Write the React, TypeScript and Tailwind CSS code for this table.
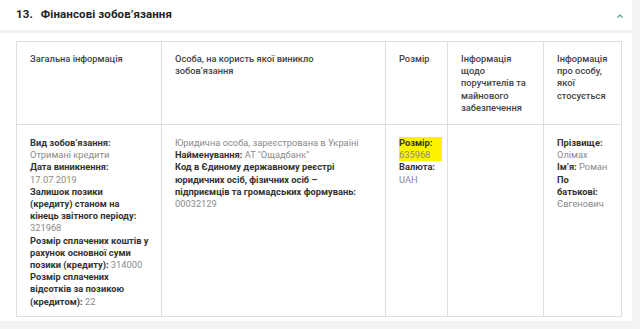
import React from 'react';

type Item = { label?: string; value: string; mark?: boolean };
// a line of the first column: [bold part, gray part]
type Line = [string, string?];

const HEADERS = [
  { text: 'Загальна інформація', w: 'w-[145px]' },
  { text: 'Особа, на користь якої виникло зобов’язання', w: 'w-[224px]' },
  { text: 'Розмір', w: 'w-[62px]' },
  { text: 'Інформація щодо поручителів та майнового забезпечення', w: 'w-[96px]' },
  { text: 'Інформація про особу, якої стосується', w: 'w-[78px]' },
];

// general info column, broken the same way as on the source page
const GENERAL: Line[] = [
  ['Вид зобов’язання:'],
  ['', 'Отримані кредити'],
  ['Дата виникнення:'],
  ['', '17.07.2019'],
  ['Залишок позики'],
  ['(кредиту) станом на'],
  ['кінець звітного періоду:'],
  ['', '321968'],
  ['Розмір сплачених коштів у'],
  ['рахунок основної суми'],
  ['позики (кредиту): ', '314000'],
  ['Розмір сплачених'],
  ['відсотків за позикою'],
  ['(кредитом): ', '22'],
];

const CELLS: Item[][] = [
  [
    { value: 'Юридична особа, зареєстрована в Україні' },
    { label: 'Найменування:', value: 'АТ "Ощадбанк"' },
    {
      label: 'Код в Єдиному державному реєстрі юридичних осіб, фізичних осіб – підприємців та громадських формувань:',
      value: '00032129',
    },
  ],
  [
    { label: 'Розмір:', value: '635968', mark: true },
    { label: 'Валюта:', value: 'UAH' },
  ],
  [],
  [
    { label: 'Прізвище:', value: 'Олімах' },
    { label: 'Ім’я:', value: 'Роман' },
    { label: 'По батькові:', value: 'Євгенович' },
  ],
];

function Entry({ item }: { item: Item }) {
  const body = (
    <>
      {item.label && <span className="font-bold text-[#333]">{item.label} </span>}
      <span className="text-[#8a8a8a]">{item.value}</span>
    </>
  );
  if (item.mark) {
    return (
      <div>
        <span className="inline-block bg-[#fff200] pr-[10px]">{body}</span>
      </div>
    );
  }
  return <div>{body}</div>;
}

const cellCls = 'border border-[#dedede] align-top px-[13px] pt-[12px] pb-[8px] h-[191px]';

export default function App() {
  return (
    <div className="w-[640px] h-[329px] bg-[#f3f3f3] font-['Roboto','Liberation_Sans',sans-serif] overflow-hidden">
      <div className="w-[632px] bg-white pb-1">
        {/* section header */}
        <div className="h-[33px] flex items-center justify-between pl-4 pr-[8px] border-b-[3px] border-[#f2f2f2]">
          <h2 className="text-[11.5px] font-bold text-[#222] tracking-[0.1px]">
            13.<span className="ml-[8px]">Фінансові зобов’язання</span>
          </h2>
          <svg width="8" height="6" viewBox="0 0 8 6" className="mt-[2px]">
            <path d="M1.5 4.5 L4 2 L6.5 4.5" fill="none" stroke="#5aa89a" strokeWidth="1.4" />
          </svg>
        </div>

        <div className="pt-[8px] pl-4 pr-[11px]">
          <table className="w-[605px] border-collapse text-[9.3px] leading-[12.2px] table-fixed">
            <thead>
              <tr>
                {HEADERS.map((h) => (
                  <th
                    key={h.text}
                    className={`${h.w} border border-[#dedede] text-left align-top font-medium text-[#444] px-[13px] pt-[11px] pb-[10px]`}
                  >
                    {h.text}
                  </th>
                ))}
              </tr>
            </thead>
            <tbody>
              <tr>
                <td className={cellCls}>
                  {GENERAL.map(([b, v], i) => (
                    <div key={i} className="whitespace-nowrap">
                      {b && <span className="font-bold text-[#333]">{b}</span>}
                      {v && <span className="text-[#8a8a8a]">{v}</span>}
                    </div>
                  ))}
                </td>
                {CELLS.map((items, i) => (
                  <td key={i} className={cellCls}>
                    {items.map((it, j) => (
                      <Entry key={j} item={it} />
                    ))}
                  </td>
                ))}
              </tr>
            </tbody>
          </table>
        </div>
      </div>
    </div>
  );
}
